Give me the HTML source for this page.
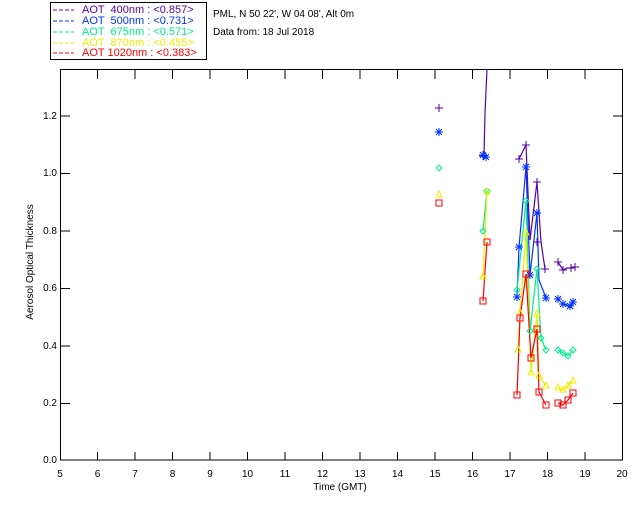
<!DOCTYPE html>
<html><head><meta charset="utf-8"><style>
html,body{margin:0;padding:0;background:#fff;width:640px;height:512px;overflow:hidden}
text{font-family:"Liberation Sans",sans-serif;font-size:10px}
.lg{font-size:11px;white-space:pre}
</style></head><body>
<svg width="640" height="512" xmlns="http://www.w3.org/2000/svg">
<rect x="50.5" y="2.5" width="156" height="57" fill="none" stroke="#000"/>
<g>
<line x1="53" y1="10" x2="74" y2="10" stroke="#5500aa" stroke-dasharray="4,2"/><text class="lg" x="82" y="13" fill="#5500aa" xml:space="preserve">AOT  400nm : &lt;0.857&gt;</text>
<line x1="53" y1="21" x2="74" y2="21" stroke="#0033ff" stroke-dasharray="4,2"/><text class="lg" x="82" y="24" fill="#0033ff" xml:space="preserve">AOT  500nm : &lt;0.731&gt;</text>
<line x1="53" y1="32" x2="74" y2="32" stroke="#00ee88" stroke-dasharray="4,2"/><text class="lg" x="82" y="35" fill="#00ee88" xml:space="preserve">AOT  675nm : &lt;0.571&gt;</text>
<line x1="53" y1="43" x2="74" y2="43" stroke="#eeee00" stroke-dasharray="4,2"/><text class="lg" x="82" y="46" fill="#eeee00" xml:space="preserve">AOT  870nm : &lt;0.455&gt;</text>
<line x1="53" y1="53" x2="74" y2="53" stroke="#ff0000" stroke-dasharray="4,2"/><text class="lg" x="82" y="56" fill="#ff0000" xml:space="preserve">AOT 1020nm : &lt;0.383&gt;</text>
</g>
<text x="213" y="17">PML, N 50 22', W 04 08', Alt 0m</text>
<text x="213" y="35">Data from: 18 Jul 2018</text>
<g stroke="#000" fill="none">
<rect x="60.5" y="69.5" width="562" height="390.5"/>
<path d="M97.5 460v-8M135 460v-8M172.5 460v-8M210 460v-8M247.5 460v-8M285 460v-8M322.5 460v-8M360 460v-8M397.5 460v-8M435 460v-8M472.5 460v-8M510 460v-8M547.5 460v-8M585 460v-8
M97.5 70v9M135 70v9M172.5 70v9M210 70v9M247.5 70v9M285 70v9M322.5 70v9M360 70v9M397.5 70v9M435 70v9M472.5 70v9M510 70v9M547.5 70v9M585 70v9
M60 403.5h10M60 346h10M60 288.5h10M60 231h10M60 173.5h10M60 116h10
M622 403.5h-9M622 346h-9M622 288.5h-9M622 231h-9M622 173.5h-9M622 116h-9"/>
</g>
<g text-anchor="middle">
<text x="60" y="477">5</text><text x="97.5" y="477">6</text><text x="135" y="477">7</text><text x="172.5" y="477">8</text><text x="210" y="477">9</text><text x="247.5" y="477">10</text><text x="285" y="477">11</text><text x="322.5" y="477">12</text><text x="360" y="477">13</text><text x="397.5" y="477">14</text><text x="435" y="477">15</text><text x="472.5" y="477">16</text><text x="510" y="477">17</text><text x="547.5" y="477">18</text><text x="585" y="477">19</text><text x="622" y="477">20</text>
<text x="340" y="490">Time (GMT)</text>
</g>
<g text-anchor="end">
<text x="57" y="463">0.0</text><text x="57" y="406">0.2</text><text x="57" y="349">0.4</text><text x="57" y="291">0.6</text><text x="57" y="234">0.8</text><text x="57" y="176">1.0</text><text x="57" y="119">1.2</text>
</g>
<text transform="translate(33,262) rotate(-90)" text-anchor="middle" font-size="9">Aerosol Optical Thickness</text>
<g fill="none" stroke-width="1.2">
<polyline stroke="#5500aa" points="487,69 485,113 484,155 483,160 486,156"/>
<polyline stroke="#5500aa" points="519,159 526,145 530,240 537,182 541,242 545,269"/>
<polyline stroke="#5500aa" points="558,262 563,270 567,268 571,268 575,267"/>
<polyline stroke="#0033ff" points="483,155 486,157"/>
<polyline stroke="#0033ff" points="517,297 519,247 526,167 530,275 537,213 539,280 546,298"/>
<polyline stroke="#0033ff" points="558,299 563,304 567,305 570,308 573,302"/>
<polyline stroke="#00ee88" points="483,231 487,191"/>
<polyline stroke="#00ee88" points="517,290 526,201 530,331 537,269 541,338 546,350"/>
<polyline stroke="#00ee88" points="558,350 563,353 568,356 573,350"/>
<polyline stroke="#eeee00" points="483,277 487,192"/>
<polyline stroke="#eeee00" points="518,350 520,313 526,233 531,373 537,314 539,376 546,386"/>
<polyline stroke="#eeee00" points="558,388 563,390 568,386 573,381"/>
<polyline stroke="#ff0000" points="483,301 487,242"/>
<polyline stroke="#ff0000" points="517,395 520,318 526,274 531,358 537,329 539,392 546,405"/>
<polyline stroke="#ff0000" points="558,403 563,405 568,400 573,393"/>
</g>
<g fill="none" stroke-width="1">
<path stroke="#5500aa" d="M435 108h8M439 104v8 M479 156h8M483 152v8 M515 159h8M519 155v8 M522 145h8M526 141v8 M533 182h8M537 178v8 M533 242h8M537 238v8 M541 269h8M545 265v8 M554 262h8M558 258v8 M559 270h8M563 266v8 M567 268h8M571 264v8 M571 267h8M575 263v8"/>
<g stroke="#0033ff">
<path d="M435 132h8M439 128v8M436 129l6 6M442 129l-6 6"/>
<path d="M479 155h8M483 151v8M480 152l6 6M486 152l-6 6M482 157h8M486 153v8M483 154l6 6M489 154l-6 6"/>
<path d="M513 297h8M517 293v8M514 294l6 6M520 294l-6 6M515 247h8M519 243v8M516 244l6 6M522 244l-6 6M522 167h8M526 163v8M523 164l6 6M529 164l-6 6M526 275h8M530 271v8M527 272l6 6M533 272l-6 6M533 213h8M537 209v8M534 210l6 6M540 210l-6 6M542 298h8M546 294v8M543 295l6 6M549 295l-6 6"/>
<path d="M554 299h8M558 295v8M555 296l6 6M561 296l-6 6M559 304h8M563 300v8M560 301l6 6M566 301l-6 6M566 306h8M570 302v8M567 303l6 6M573 303l-6 6M569 302h8M573 298v8M570 299l6 6M576 299l-6 6"/>
</g>
<path stroke="#00ee88" d="M439 165l3 3-3 3-3-3z M483 228l3 3-3 3-3-3z M487 188l3 3-3 3-3-3z M517 287l3 3-3 3-3-3z M526 198l3 3-3 3-3-3z M530 328l3 3-3 3-3-3z M537 266l3 3-3 3-3-3z M541 335l3 3-3 3-3-3z M546 347l3 3-3 3-3-3z M558 347l3 3-3 3-3-3z M563 350l3 3-3 3-3-3z M568 353l3 3-3 3-3-3z M573 347l3 3-3 3-3-3z"/>
<path stroke="#eeee00" d="M439 191l3 6h-6z M483 273l3 6h-6z M487 188l3 6h-6z M518 346l3 6h-6z M520 309l3 6h-6z M526 229l3 6h-6z M531 369l3 6h-6z M537 310l3 6h-6z M539 372l3 6h-6z M546 382l3 6h-6z M558 384l3 6h-6z M563 386l3 6h-6z M568 382l3 6h-6z M573 377l3 6h-6z"/>
<path stroke="#ff0000" d="M436 200h6v6h-6z M480 298h6v6h-6z M484 239h6v6h-6z M514 392h6v6h-6z M517 315h6v6h-6z M523 271h6v6h-6z M528 355h6v6h-6z M534 326h6v6h-6z M536 389h6v6h-6z M543 402h6v6h-6z M555 400h6v6h-6z M560 402h6v6h-6z M565 397h6v6h-6z M570 390h6v6h-6z"/>
</g>
</svg>
</body></html>
